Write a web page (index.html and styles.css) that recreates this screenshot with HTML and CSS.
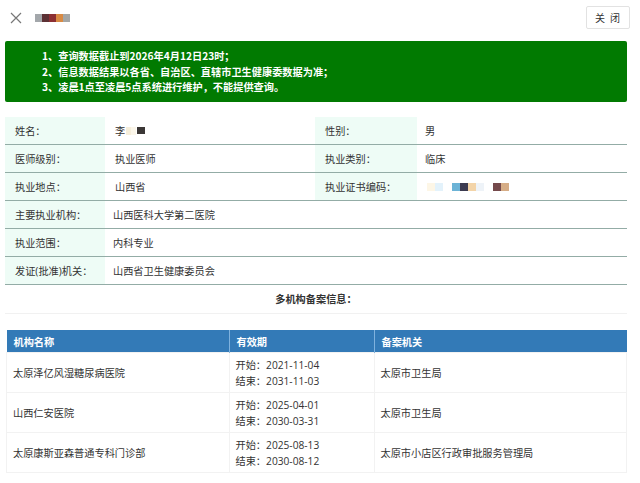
FILE: index.html
```html
<!DOCTYPE html>
<html lang="zh-CN">
<head>
    <meta charset="UTF-8">
    <meta name="viewport" content="width=device-width, initial-scale=1.0">
    <title>执业医师查询</title>
    <link rel="stylesheet" href="styles.css">
</head>
<body>
    <!-- Top bar -->
    <div class="topbar">
        <div class="topbar-left">
            <svg class="close-x" width="12" height="12" viewBox="0 0 12 12">
                <path d="M1 1 L11 11 M11 1 L1 11" stroke="#777" stroke-width="1.2" fill="none"/>
            </svg>
            <span class="mosaic">
                <i style="background:#a3a7ab"></i><i style="background:#5c3034"></i><i style="background:#8c2f33"></i><i style="background:#d88a44"></i><i style="background:#a4a6a6"></i>
            </span>
        </div>
        <button class="btn-close">关闭</button>
    </div>

    <!-- Notice -->
    <div class="notice">
        <p>1、查询数据截止到2026年4月12日23时；</p>
        <p>2、信息数据结果以各省、自治区、直辖市卫生健康委数据为准；</p>
        <p>3、凌晨1点至凌晨5点系统进行维护，不能提供查询。</p>
    </div>

    <!-- Basic info -->
    <div class="info">
        <div class="row">
            <div class="label">姓名：</div>
            <div class="value">李<span class="mosaic name"><i style="background:#f6eedb"></i><i style="background:#fbf6ea"></i><i class="dark" style="background:#3b3736"></i></span></div>
            <div class="label">性别：</div>
            <div class="value">男</div>
        </div>
        <div class="row">
            <div class="label">医师级别：</div>
            <div class="value">执业医师</div>
            <div class="label">执业类别：</div>
            <div class="value">临床</div>
        </div>
        <div class="row">
            <div class="label">执业地点：</div>
            <div class="value">山西省</div>
            <div class="label">执业证书编码：</div>
            <div class="value"><span class="mosaic code"><i style="background:#fdf6e6"></i><i style="background:#e3f2fb"></i><i class="gap"></i><i style="background:#6cb3d6"></i><i style="background:#3b3a50"></i><i style="background:#f3d4a8"></i><i style="background:#eef3f8"></i><i class="gap"></i><i style="background:#754a4c"></i><i style="background:#d6ad86"></i></span></div>
        </div>
        <div class="row">
            <div class="label">主要执业机构：</div>
            <div class="value wide">山西医科大学第二医院</div>
        </div>
        <div class="row">
            <div class="label">执业范围：</div>
            <div class="value wide">内科专业</div>
        </div>
        <div class="row">
            <div class="label">发证(批准)机关：</div>
            <div class="value wide">山西省卫生健康委员会</div>
        </div>
    </div>

    <div class="section-title">多机构备案信息：</div>

    <!-- Multi-org records -->
    <table class="records">
        <thead>
            <tr>
                <th class="c1">机构名称</th>
                <th class="c2">有效期</th>
                <th>备案机关</th>
            </tr>
        </thead>
        <tbody>
            <tr>
                <td>太原泽亿风湿糖尿病医院</td>
                <td>开始：2021-11-04<br>结束：2031-11-03</td>
                <td>太原市卫生局</td>
            </tr>
            <tr>
                <td>山西仁安医院</td>
                <td>开始：2025-04-01<br>结束：2030-03-31</td>
                <td>太原市卫生局</td>
            </tr>
            <tr>
                <td>太原康斯亚森普通专科门诊部</td>
                <td>开始：2025-08-13<br>结束：2030-08-12</td>
                <td>太原市小店区行政审批服务管理局</td>
            </tr>
        </tbody>
    </table>
</body>
</html>
```

FILE: styles.css
```css
body {
    margin: 0;
    padding: 0;
    font-family: "Open Sans", "Noto Sans CJK SC", sans-serif;
    font-size: 10.2px;
    color: #333;
    background: #fff;
}
.topbar {
    display: flex;
    justify-content: space-between;
    align-items: flex-start;
    height: 41px;
    padding: 6px 10px 0 10px;
    box-sizing: border-box;
}
.topbar-left {
    display: flex;
    align-items: center;
    gap: 13px;
    margin-top: 6px;
}
.close-x {
    display: block;
}
.mosaic {
    display: inline-flex;
    vertical-align: middle;
}
.mosaic i {
    display: block;
    width: 7px;
    height: 8px;
}
.mosaic.name {
    margin-left: 1px;
    align-items: center;
}
.mosaic.name i {
    width: 5px;
    height: 8px;
}
.mosaic.name i.dark {
    width: 8px;
    height: 7px;
    margin-left: 1px;
}
.mosaic.code {
    margin-left: 2px;
}
.mosaic.code i {
    width: 8px;
    height: 8px;
}
.mosaic.code i.gap {
    width: 9px;
}
.btn-close {
    width: 44px;
    height: 23px;
    padding: 0 0 0 4px;
    border: 1px solid #e2e2e2;
    border-radius: 2px;
    background: #fff;
    color: #333;
    font-family: "Noto Sans CJK SC", sans-serif;
    font-size: 10px;
    letter-spacing: 5px;
}
.notice {
    margin: 0 13px 0 5px;
    height: 61px;
    box-sizing: border-box;
    padding: 7px 0 0 37px;
    background: #017a01;
    border-radius: 2px;
    color: #fff;
    font-weight: bold;
    font-family: "Noto Sans CJK SC", sans-serif;
}
.notice p {
    margin: 0;
    line-height: 15.5px;
}
.info {
    margin: 15px 13px 0 5px;
}
.row {
    display: grid;
    grid-template-columns: 100px 210px 102px 1fr;
    height: 28px;
    border-bottom: 1px solid #93aca6;
    box-sizing: border-box;
}
.label {
    background: #eefcf6;
    padding-left: 10px;
    display: flex;
    align-items: center;
}
.value {
    padding-left: 10px;
    display: flex;
    align-items: center;
}
.row .value:last-child {
    padding-left: 8px;
}
.value.wide {
    grid-column: 2 / 5;
    padding-left: 10px;
}
.section-title {
    margin: 0 13px 0 5px;
    padding: 4px 0 4px;
    text-align: center;
    font-weight: bold;
    line-height: 20px;
    border-bottom: 1px solid #f1f1f1;
    font-family: "Noto Sans CJK SC", sans-serif;
}
.records {
    margin: 16px 13px 0 6px;
    width: 621px;
    border-collapse: collapse;
}
.records th {
    background: #337ab7;
    color: #fff;
    font-weight: bold;
    text-align: left;
    height: 22px;
    padding: 0 7px;
    border-left: 1px solid #7fb2de;
    font-family: "Noto Sans CJK SC", sans-serif;
}
.records th:first-child {
    border-left: none;
}
.records th.c1 {
    width: 208px;
}
.records th.c2 {
    width: 130px;
}
.records td {
    height: 40px;
    padding: 0 6px;
    line-height: 16px;
    border: 1px solid #f2f2f2;
    box-sizing: border-box;
}
```
